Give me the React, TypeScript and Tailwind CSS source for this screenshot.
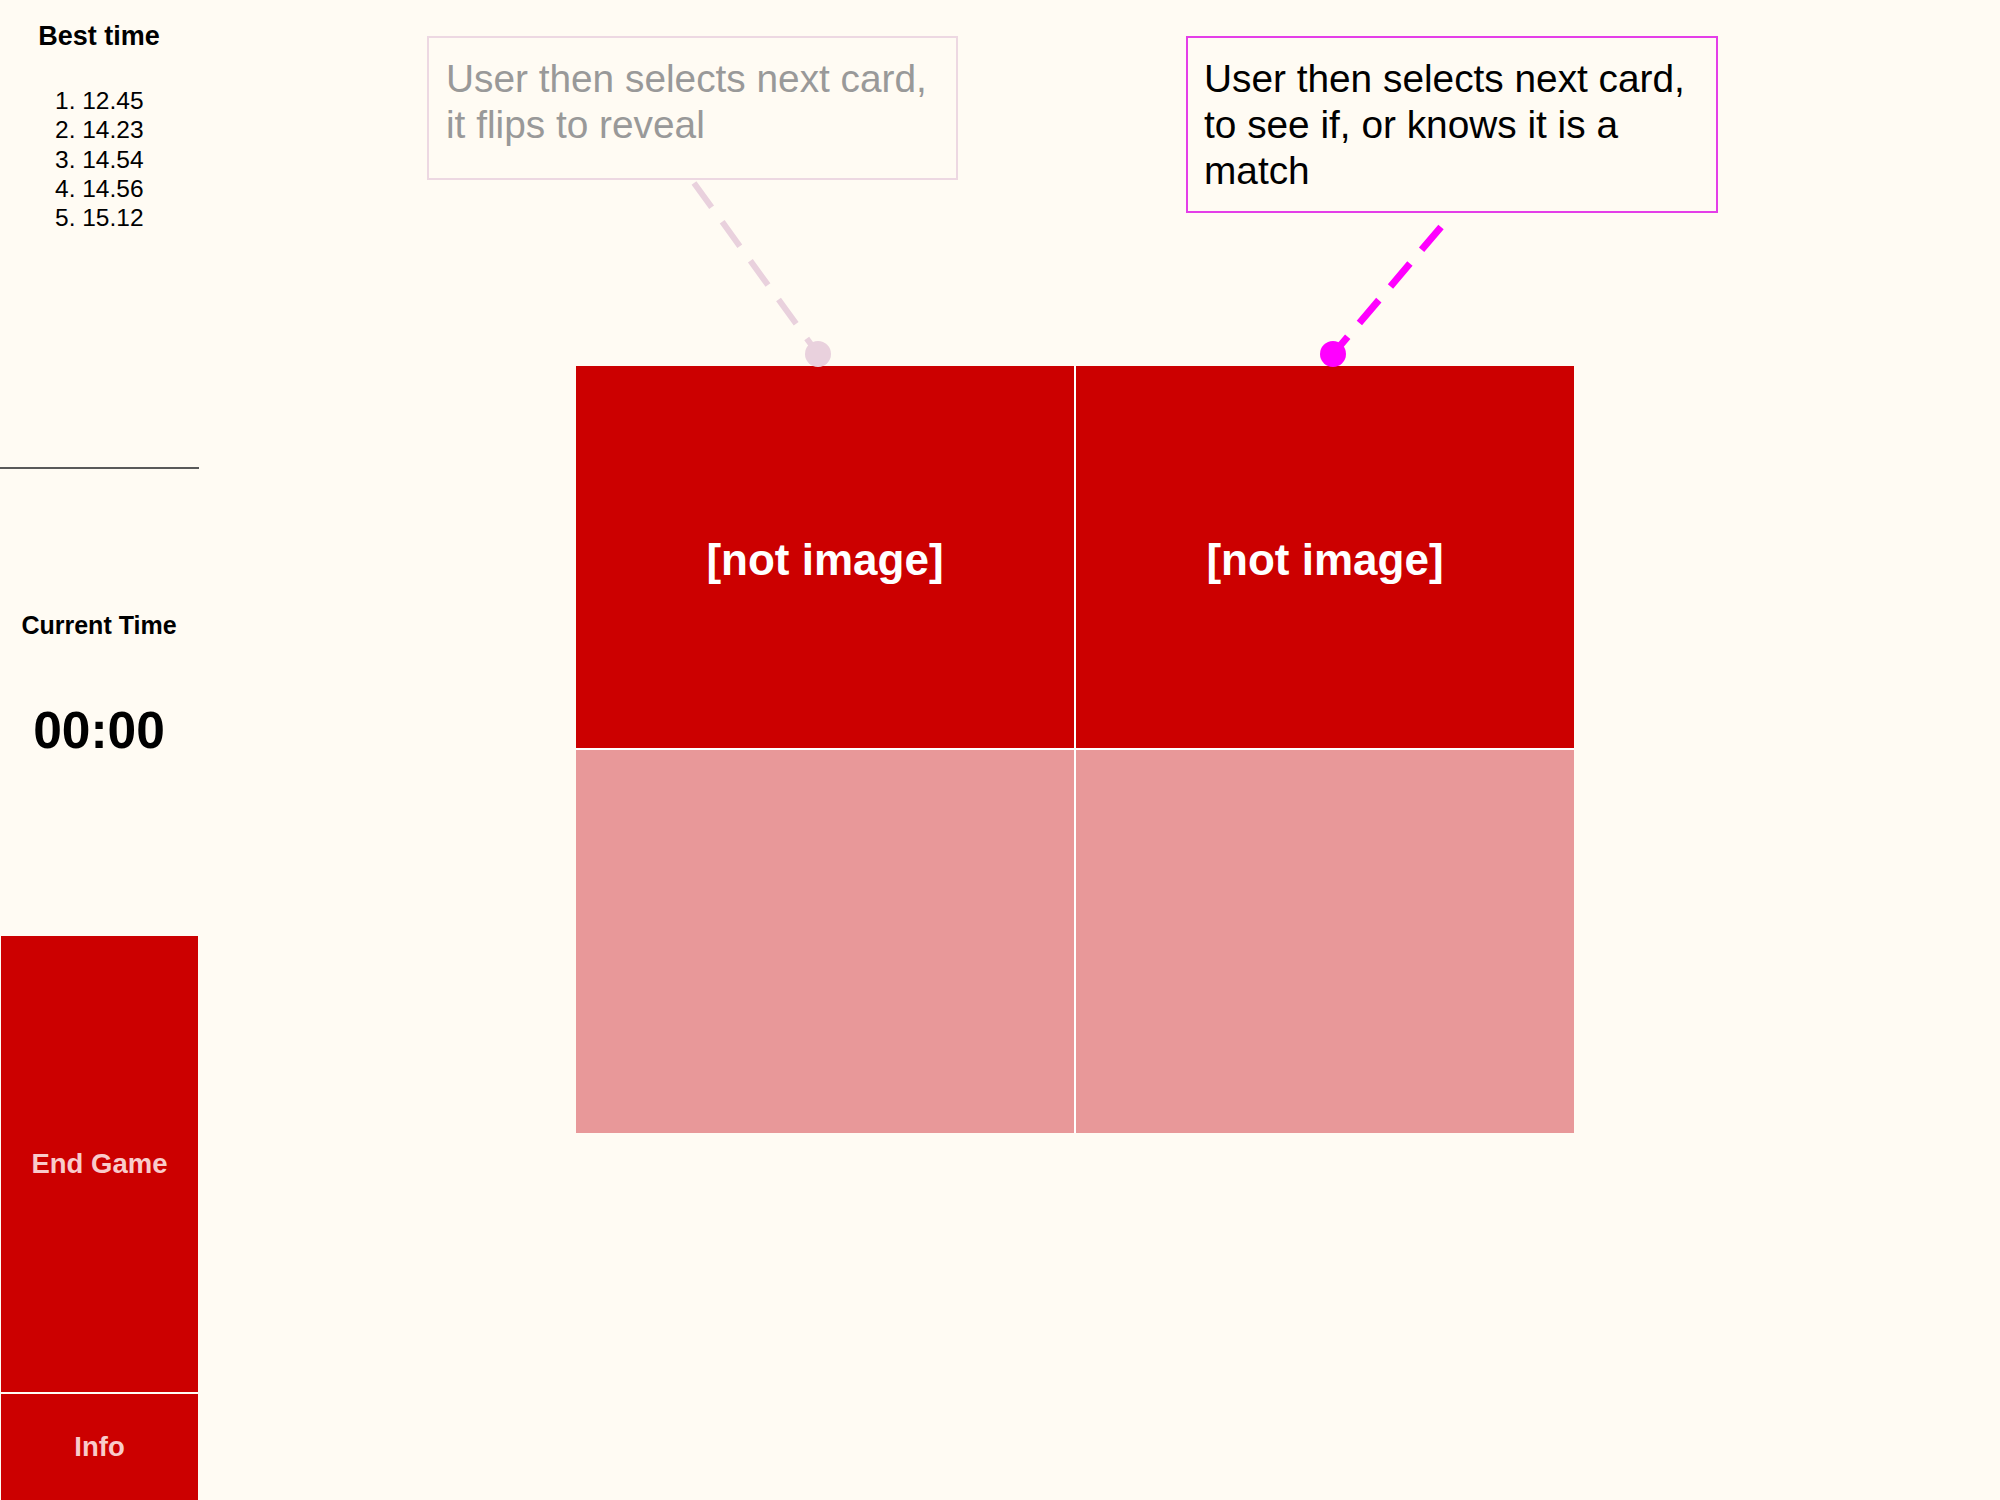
import React from "react";

export default function App() {
  const best = ["1. 12.45", "2. 14.23", "3. 14.54", "4. 14.56", "5. 15.12"];
  return (
    <div className="relative w-[2000px] h-[1500px] bg-[#FFFBF3] flex font-['Liberation_Sans',Arial,sans-serif] text-black overflow-hidden">
      {/* Sidebar */}
      <div className="w-[198px] flex flex-col shrink-0">
        <div className="h-[467px] flex flex-col">
          <div className="pt-[21px] h-[51px] text-[27px] leading-[30px] font-bold text-center">Best time</div>
          <div className="mt-[35px] pl-[55px] text-[24.5px] leading-[29.3px]">
            {best.map((b) => (
              <div key={b}>{b}</div>
            ))}
          </div>
        </div>
        <div className="h-[2px] w-[199px] bg-[#595959]" />
        <div className="h-[467px] flex flex-col items-center">
          <div className="mt-[141px] text-[25px] leading-[30px] font-bold">Current Time</div>
          <div className="mt-[61px] text-[51.5px] leading-[58px] font-bold">00:00</div>
        </div>
        <div className="h-[456px] ml-[1px] bg-[#CC0000] flex items-center justify-center text-[27.5px] font-bold text-[#F9CBCB]">
          End Game
        </div>
        <div className="h-[2px]" />
        <div className="h-[106px] ml-[1px] bg-[#CC0000] flex items-center justify-center text-[27.5px] font-bold text-[#F9CBCB]">
          Info
        </div>
      </div>

      {/* Main */}
      <div className="flex-1 pl-[378px] pt-[366px]">
        <div className="w-[998px] grid grid-cols-2 gap-[2px] bg-[#FFFFFF]">
          <div className="h-[382px] pt-[5px] bg-[#CC0000] flex items-center justify-center text-white font-bold text-[44px]">
            [not image]
          </div>
          <div className="h-[382px] pt-[5px] bg-[#CC0000] flex items-center justify-center text-white font-bold text-[44px]">
            [not image]
          </div>
          <div className="h-[383px] bg-[#E89899]" />
          <div className="h-[383px] bg-[#E89899]" />
        </div>
      </div>

      {/* Annotation callouts */}
      <div className="absolute left-[427px] top-[36px] w-[531px] h-[144px] border-2 border-[#EDD8E2] pl-[17px] pt-[18px] text-[38.8px] leading-[46px] text-[#999999]">
        User then selects next card,
        <br />
        it flips to reveal
      </div>
      <div className="absolute left-[1186px] top-[36px] w-[532px] h-[177px] border-2 border-[#E43EE8] pl-[16px] pt-[18px] text-[38.8px] leading-[46px] text-black">
        User then selects next card,
        <br />
        to see if, or knows it is a
        <br />
        match
      </div>
      <svg className="absolute left-0 top-0 pointer-events-none" width="2000" height="1500" viewBox="0 0 2000 1500">
        <line x1="694" y1="183" x2="818" y2="354" stroke="#E9D1DD" strokeWidth="6" strokeDasharray="30 18" />
        <circle cx="818" cy="354" r="13" fill="#E9D1DD" />
        <line x1="1441" y1="227" x2="1333" y2="354" stroke="#FF00FF" strokeWidth="7" strokeDasharray="30 18" />
        <circle cx="1333" cy="354" r="13" fill="#FF00FF" />
      </svg>
    </div>
  );
}
